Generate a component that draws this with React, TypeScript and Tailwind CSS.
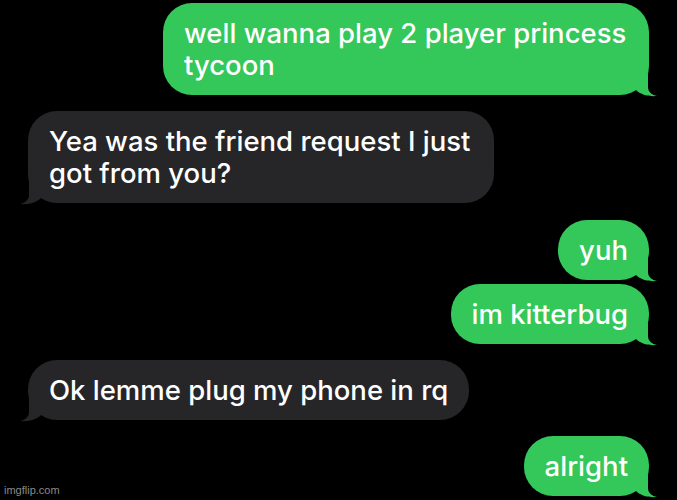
import React from "react";

type Msg = { lines: string[]; me: boolean; gap: string; width?: string };

const messages: Msg[] = [
  {
    lines: ["well wanna play 2 player princess", "tycoon"],
    me: true,
    gap: "mt-[3px]",
    width: "w-[486px]",
  },
  {
    lines: ["Yea was the friend request I just", "got from you?"],
    me: false,
    gap: "mt-[16px]",
    width: "w-[466px]",
  },
  { lines: ["yuh"], me: true, gap: "mt-[17px]" },
  { lines: ["im kitterbug"], me: true, gap: "mt-[4px]" },
  { lines: ["Ok lemme plug my phone in rq"], me: false, gap: "mt-[16px]" },
  { lines: ["alright"], me: true, gap: "mt-[16px]" },
];

function Tail({ me }: { me: boolean }) {
  return (
    <svg
      viewBox="0 0 30 26"
      className={
        me
          ? "absolute right-[-9px] bottom-[-2px] w-[30px] h-[26px]"
          : "absolute left-[-9px] bottom-[-2px] w-[30px] h-[26px] -scale-x-100"
      }
    >
      <path
        d="M8 3 L20 3 L20 16 C20 21 24 24 29 25 C23 25.5 14 25 8 19 Z"
        fill={me ? "#34c759" : "#262629"}
      />
    </svg>
  );
}

function Bubble({ msg }: { msg: Msg }) {
  return (
    <div className={`flex ${msg.me ? "justify-end" : "justify-start"} ${msg.gap}`}>
      <div
        className={`relative ${msg.width ?? ""} rounded-[29px] px-[21px] py-[14px] text-[27.5px] font-medium leading-[32px] text-white ${
          msg.me ? "bg-[#34c759]" : "bg-[#262629]"
        }`}
      >
        <Tail me={msg.me} />
        {msg.lines.map((l, i) => (
          <div key={i} className="relative whitespace-nowrap">
            {l}
          </div>
        ))}
      </div>
    </div>
  );
}

export default function App() {
  return (
    <div
      className="relative w-[677px] h-[500px] overflow-hidden bg-black px-[28px]"
      style={{ fontFamily: "Inter, 'Noto Sans', sans-serif" }}
    >
      <div className="flex flex-col">
        {messages.map((m, i) => (
          <Bubble key={i} msg={m} />
        ))}
      </div>
      <div className="absolute left-[4px] bottom-[3px] text-[11px] leading-[13px] text-[#8a8a8a] font-['Liberation_Sans',sans-serif]">
        imgflip.com
      </div>
    </div>
  );
}
